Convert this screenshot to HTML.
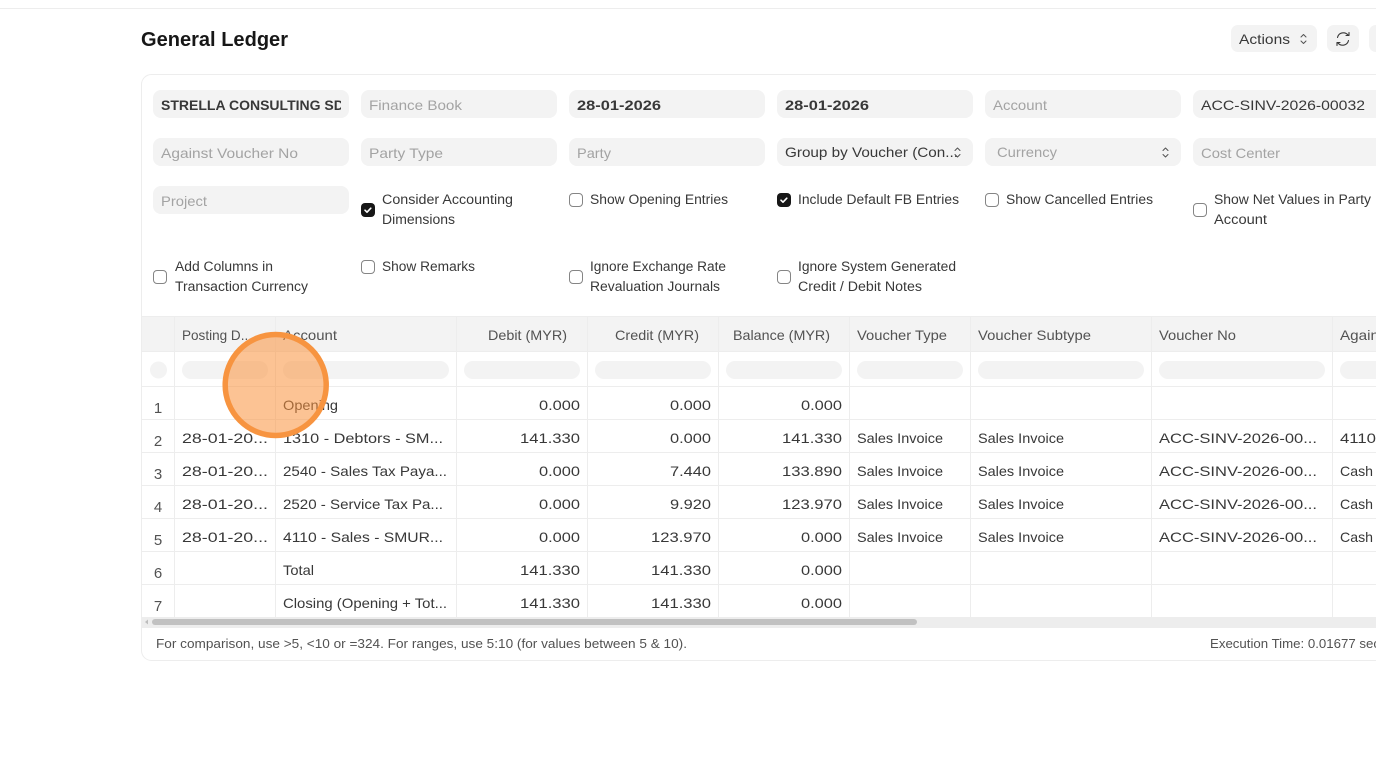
<!DOCTYPE html>
<html><head><meta charset="utf-8"><title>General Ledger</title>
<style>
html,body{margin:0;padding:0;background:#fff;width:1376px;height:769px;overflow:hidden}
svg{display:block}
text{font-family:"Liberation Sans",sans-serif;font-size:14px;fill:#383838;white-space:pre}
.ph{fill:#a3a3a3}
.val{font-weight:bold;fill:#383838}
.cb{font-size:13.500px;fill:#383838}
.h{fill:#525252}
.n{fill:#525252;text-anchor:middle;font-size:15px}
.f{font-size:13px;fill:#525252}
.in{fill:#f3f3f3}
.box{fill:#fff;stroke:#858585;stroke-width:1}
.chk{fill:#171717}
.tick{fill:none;stroke:#fff;stroke-width:1.600;stroke-linecap:round;stroke-linejoin:round}
.car{fill:none;stroke:#525252;stroke-width:1;stroke-linecap:round;stroke-linejoin:round}
.l{stroke:#ededed;stroke-width:1}
</style></head><body>
<svg width="1376" height="769" viewBox="0 0 1376 769" xmlns="http://www.w3.org/2000/svg">
<defs><clipPath id="c1"><rect x="161" y="90" width="180" height="28"/></clipPath></defs>
<rect width="1376" height="769" fill="#fff"/>
<rect x="0" y="8" width="1376" height="1" fill="#ededed"/>

<text x="141" y="46" textLength="147" lengthAdjust="spacingAndGlyphs" style="font-size:20px;font-weight:bold;fill:#171717">General Ledger</text>

<rect x="1231" y="25" width="86" height="27" rx="7" class="in"/>
<text x="1239" y="44" textLength="51" lengthAdjust="spacingAndGlyphs">Actions</text>
<path class="car" d="M1301 37l2.500-2.500 2.500 2.500M1301 41l2.500 2.500 2.500-2.500"/>
<rect x="1327" y="25" width="32" height="27" rx="7" class="in"/>
<path d="M1337.500 37.500a6 6 0 0 1 10.500-2.500M1348.500 40.500a6 6 0 0 1-10.500 2.500" fill="none" stroke="#383838" stroke-width="1.100" stroke-linecap="round"/>
<path d="M1349 32.500v3h-3M1337 45.500v-3h3" fill="none" stroke="#383838" stroke-width="1.100" stroke-linecap="round" stroke-linejoin="round"/>
<rect x="1369" y="25" width="20" height="27" rx="7" class="in"/>

<rect x="141.500" y="74.500" width="1300" height="586" rx="10" fill="#fff" stroke="#ededed"/>

<!-- filters row 1 -->
<rect x="153" y="90" width="196" height="28" rx="8" class="in"/>
<rect x="361" y="90" width="196" height="28" rx="8" class="in"/>
<rect x="569" y="90" width="196" height="28" rx="8" class="in"/>
<rect x="777" y="90" width="196" height="28" rx="8" class="in"/>
<rect x="985" y="90" width="196" height="28" rx="8" class="in"/>
<rect x="1193" y="90" width="196" height="28" rx="8" class="in"/>
<g clip-path="url(#c1)"><text x="161" y="110" class="val" textLength="193" lengthAdjust="spacingAndGlyphs">STRELLA CONSULTING SDN</text></g>
<text x="369" y="110" class="ph" textLength="93" lengthAdjust="spacingAndGlyphs">Finance Book</text>
<text x="577" y="110" class="val" textLength="84" lengthAdjust="spacingAndGlyphs">28-01-2026</text>
<text x="785" y="110" class="val" textLength="84" lengthAdjust="spacingAndGlyphs">28-01-2026</text>
<text x="993" y="110" class="ph" textLength="54" lengthAdjust="spacingAndGlyphs">Account</text>
<text x="1201" y="110" textLength="164" lengthAdjust="spacingAndGlyphs">ACC-SINV-2026-00032</text>

<!-- filters row 2 -->
<rect x="153" y="138" width="196" height="28" rx="8" class="in"/>
<rect x="361" y="138" width="196" height="28" rx="8" class="in"/>
<rect x="569" y="138" width="196" height="28" rx="8" class="in"/>
<rect x="777" y="138" width="196" height="28" rx="8" class="in"/>
<rect x="985" y="138" width="196" height="28" rx="8" class="in"/>
<rect x="1193" y="138" width="196" height="28" rx="8" class="in"/>
<text x="161" y="158" class="ph" textLength="137" lengthAdjust="spacingAndGlyphs">Against Voucher No</text>
<text x="369" y="158" class="ph" textLength="74" lengthAdjust="spacingAndGlyphs">Party Type</text>
<text x="577" y="158" class="ph" textLength="34" lengthAdjust="spacingAndGlyphs">Party</text>
<text x="785" y="157" textLength="173" lengthAdjust="spacingAndGlyphs">Group by Voucher (Con...</text>
<path class="car" d="M955 150.500l2.500-2.500 2.500 2.500M955 154.500l2.500 2.500 2.500-2.500"/>
<text x="997" y="157" class="ph" textLength="60" lengthAdjust="spacingAndGlyphs">Currency</text>
<path class="car" d="M1163 150.500l2.500-2.500 2.500 2.500M1163 154.500l2.500 2.500 2.500-2.500"/>
<text x="1201" y="158" class="ph" textLength="79" lengthAdjust="spacingAndGlyphs">Cost Center</text>

<!-- row 3 -->
<rect x="153" y="186" width="196" height="28" rx="8" class="in"/>
<text x="161" y="206" class="ph" textLength="46" lengthAdjust="spacingAndGlyphs">Project</text>

<rect x="361" y="203" width="14" height="14" rx="4" class="chk"/>
<path class="tick" d="M365 210.200l2 2 3.800-4"/>
<text x="382" y="204" class="cb" textLength="131" lengthAdjust="spacingAndGlyphs">Consider Accounting</text>
<text x="382" y="224" class="cb" textLength="73" lengthAdjust="spacingAndGlyphs">Dimensions</text>

<rect x="569.500" y="193.500" width="13" height="13" rx="3.500" class="box"/>
<text x="590" y="204" class="cb" textLength="138" lengthAdjust="spacingAndGlyphs">Show Opening Entries</text>

<rect x="777" y="193" width="14" height="14" rx="4" class="chk"/>
<path class="tick" d="M781 200.200l2 2 3.800-4"/>
<text x="798" y="204" class="cb" textLength="161" lengthAdjust="spacingAndGlyphs">Include Default FB Entries</text>

<rect x="985.500" y="193.500" width="13" height="13" rx="3.500" class="box"/>
<text x="1006" y="204" class="cb" textLength="147" lengthAdjust="spacingAndGlyphs">Show Cancelled Entries</text>

<rect x="1193.500" y="203.500" width="13" height="13" rx="3.500" class="box"/>
<text x="1214" y="204" class="cb" textLength="157" lengthAdjust="spacingAndGlyphs">Show Net Values in Party</text>
<text x="1214" y="224" class="cb" textLength="53" lengthAdjust="spacingAndGlyphs">Account</text>

<!-- row 4 -->
<rect x="153.500" y="270.500" width="13" height="13" rx="3.500" class="box"/>
<text x="175" y="271" class="cb" textLength="98" lengthAdjust="spacingAndGlyphs">Add Columns in</text>
<text x="175" y="291" class="cb" textLength="133" lengthAdjust="spacingAndGlyphs">Transaction Currency</text>

<rect x="361.500" y="260.500" width="13" height="13" rx="3.500" class="box"/>
<text x="382" y="271" class="cb" textLength="93" lengthAdjust="spacingAndGlyphs">Show Remarks</text>

<rect x="569.500" y="270.500" width="13" height="13" rx="3.500" class="box"/>
<text x="590" y="271" class="cb" textLength="136" lengthAdjust="spacingAndGlyphs">Ignore Exchange Rate</text>
<text x="590" y="291" class="cb" textLength="130" lengthAdjust="spacingAndGlyphs">Revaluation Journals</text>

<rect x="777.500" y="270.500" width="13" height="13" rx="3.500" class="box"/>
<text x="798" y="271" class="cb" textLength="158" lengthAdjust="spacingAndGlyphs">Ignore System Generated</text>
<text x="798" y="291" class="cb" textLength="124" lengthAdjust="spacingAndGlyphs">Credit / Debit Notes</text>

<!-- table header -->
<rect x="142" y="316" width="1234" height="35" fill="#f3f3f3"/>
<line class="l" x1="142" x2="1376" y1="316.500" y2="316.500"/>
<line class="l" x1="142" x2="1376" y1="351.500" y2="351.500"/>
<line class="l" x1="142" x2="1376" y1="386.500" y2="386.500"/>
<line class="l" x1="142" x2="1376" y1="419.500" y2="419.500"/>
<line class="l" x1="142" x2="1376" y1="452.500" y2="452.500"/>
<line class="l" x1="142" x2="1376" y1="485.500" y2="485.500"/>
<line class="l" x1="142" x2="1376" y1="518.500" y2="518.500"/>
<line class="l" x1="142" x2="1376" y1="551.500" y2="551.500"/>
<line class="l" x1="142" x2="1376" y1="584.500" y2="584.500"/>
<line class="l" x1="174.500" x2="174.500" y1="316" y2="618"/>
<line class="l" x1="275.500" x2="275.500" y1="316" y2="618"/>
<line class="l" x1="456.500" x2="456.500" y1="316" y2="618"/>
<line class="l" x1="587.500" x2="587.500" y1="316" y2="618"/>
<line class="l" x1="718.500" x2="718.500" y1="316" y2="618"/>
<line class="l" x1="849.500" x2="849.500" y1="316" y2="618"/>
<line class="l" x1="970.500" x2="970.500" y1="316" y2="618"/>
<line class="l" x1="1151.500" x2="1151.500" y1="316" y2="618"/>
<line class="l" x1="1332.500" x2="1332.500" y1="316" y2="618"/>

<text x="182" y="340" class="h" textLength="70" lengthAdjust="spacingAndGlyphs">Posting D...</text>
<text x="283" y="340" class="h" textLength="54" lengthAdjust="spacingAndGlyphs">Account</text>
<text x="488" y="340" class="h" textLength="79" lengthAdjust="spacingAndGlyphs">Debit (MYR)</text>
<text x="615" y="340" class="h" textLength="84" lengthAdjust="spacingAndGlyphs">Credit (MYR)</text>
<text x="733" y="340" class="h" textLength="97" lengthAdjust="spacingAndGlyphs">Balance (MYR)</text>
<text x="857" y="340" class="h" textLength="90" lengthAdjust="spacingAndGlyphs">Voucher Type</text>
<text x="978" y="340" class="h" textLength="113" lengthAdjust="spacingAndGlyphs">Voucher Subtype</text>
<text x="1159" y="340" class="h" textLength="77" lengthAdjust="spacingAndGlyphs">Voucher No</text>
<text x="1340" y="340" class="h" textLength="39" lengthAdjust="spacingAndGlyphs">Again</text>

<!-- filter row -->
<circle cx="158.500" cy="370" r="8.500" class="in"/>
<rect x="182" y="361" width="86" height="18" rx="9" class="in"/>
<rect x="283" y="361" width="166" height="18" rx="9" class="in"/>
<rect x="464" y="361" width="116" height="18" rx="9" class="in"/>
<rect x="595" y="361" width="116" height="18" rx="9" class="in"/>
<rect x="726" y="361" width="116" height="18" rx="9" class="in"/>
<rect x="857" y="361" width="106" height="18" rx="9" class="in"/>
<rect x="978" y="361" width="166" height="18" rx="9" class="in"/>
<rect x="1159" y="361" width="166" height="18" rx="9" class="in"/>
<rect x="1340" y="361" width="60" height="18" rx="9" class="in"/>

<!-- rows -->
<text x="158" y="413" class="n">1</text>
<text x="283" y="410" textLength="55" lengthAdjust="spacingAndGlyphs">Opening</text>
<text x="539" y="410" textLength="41" lengthAdjust="spacingAndGlyphs">0.000</text>
<text x="670" y="410" textLength="41" lengthAdjust="spacingAndGlyphs">0.000</text>
<text x="801" y="410" textLength="41" lengthAdjust="spacingAndGlyphs">0.000</text>

<text x="158" y="446" class="n">2</text>
<text x="182" y="443" textLength="86" lengthAdjust="spacingAndGlyphs">28-01-20...</text>
<text x="283" y="443" textLength="160" lengthAdjust="spacingAndGlyphs">1310 - Debtors - SM...</text>
<text x="520" y="443" textLength="60" lengthAdjust="spacingAndGlyphs">141.330</text>
<text x="670" y="443" textLength="41" lengthAdjust="spacingAndGlyphs">0.000</text>
<text x="782" y="443" textLength="60" lengthAdjust="spacingAndGlyphs">141.330</text>
<text x="857" y="443" textLength="86" lengthAdjust="spacingAndGlyphs">Sales Invoice</text>
<text x="978" y="443" textLength="86" lengthAdjust="spacingAndGlyphs">Sales Invoice</text>
<text x="1159" y="443" textLength="158" lengthAdjust="spacingAndGlyphs">ACC-SINV-2026-00...</text>
<text x="1340" y="443" textLength="36" lengthAdjust="spacingAndGlyphs">4110</text>

<text x="158" y="479" class="n">3</text>
<text x="182" y="476" textLength="86" lengthAdjust="spacingAndGlyphs">28-01-20...</text>
<text x="283" y="476" textLength="164" lengthAdjust="spacingAndGlyphs">2540 - Sales Tax Paya...</text>
<text x="539" y="476" textLength="41" lengthAdjust="spacingAndGlyphs">0.000</text>
<text x="670" y="476" textLength="41" lengthAdjust="spacingAndGlyphs">7.440</text>
<text x="782" y="476" textLength="60" lengthAdjust="spacingAndGlyphs">133.890</text>
<text x="857" y="476" textLength="86" lengthAdjust="spacingAndGlyphs">Sales Invoice</text>
<text x="978" y="476" textLength="86" lengthAdjust="spacingAndGlyphs">Sales Invoice</text>
<text x="1159" y="476" textLength="158" lengthAdjust="spacingAndGlyphs">ACC-SINV-2026-00...</text>
<text x="1340" y="476" textLength="33" lengthAdjust="spacingAndGlyphs">Cash</text>

<text x="158" y="512" class="n">4</text>
<text x="182" y="509" textLength="86" lengthAdjust="spacingAndGlyphs">28-01-20...</text>
<text x="283" y="509" textLength="160" lengthAdjust="spacingAndGlyphs">2520 - Service Tax Pa...</text>
<text x="539" y="509" textLength="41" lengthAdjust="spacingAndGlyphs">0.000</text>
<text x="670" y="509" textLength="41" lengthAdjust="spacingAndGlyphs">9.920</text>
<text x="782" y="509" textLength="60" lengthAdjust="spacingAndGlyphs">123.970</text>
<text x="857" y="509" textLength="86" lengthAdjust="spacingAndGlyphs">Sales Invoice</text>
<text x="978" y="509" textLength="86" lengthAdjust="spacingAndGlyphs">Sales Invoice</text>
<text x="1159" y="509" textLength="158" lengthAdjust="spacingAndGlyphs">ACC-SINV-2026-00...</text>
<text x="1340" y="509" textLength="33" lengthAdjust="spacingAndGlyphs">Cash</text>

<text x="158" y="545" class="n">5</text>
<text x="182" y="542" textLength="86" lengthAdjust="spacingAndGlyphs">28-01-20...</text>
<text x="283" y="542" textLength="160" lengthAdjust="spacingAndGlyphs">4110 - Sales - SMUR...</text>
<text x="539" y="542" textLength="41" lengthAdjust="spacingAndGlyphs">0.000</text>
<text x="651" y="542" textLength="60" lengthAdjust="spacingAndGlyphs">123.970</text>
<text x="801" y="542" textLength="41" lengthAdjust="spacingAndGlyphs">0.000</text>
<text x="857" y="542" textLength="86" lengthAdjust="spacingAndGlyphs">Sales Invoice</text>
<text x="978" y="542" textLength="86" lengthAdjust="spacingAndGlyphs">Sales Invoice</text>
<text x="1159" y="542" textLength="158" lengthAdjust="spacingAndGlyphs">ACC-SINV-2026-00...</text>
<text x="1340" y="542" textLength="33" lengthAdjust="spacingAndGlyphs">Cash</text>

<text x="158" y="578" class="n">6</text>
<text x="283" y="575" textLength="31" lengthAdjust="spacingAndGlyphs">Total</text>
<text x="520" y="575" textLength="60" lengthAdjust="spacingAndGlyphs">141.330</text>
<text x="651" y="575" textLength="60" lengthAdjust="spacingAndGlyphs">141.330</text>
<text x="801" y="575" textLength="41" lengthAdjust="spacingAndGlyphs">0.000</text>

<text x="158" y="611" class="n">7</text>
<text x="283" y="608" textLength="164" lengthAdjust="spacingAndGlyphs">Closing (Opening + Tot...</text>
<text x="520" y="608" textLength="60" lengthAdjust="spacingAndGlyphs">141.330</text>
<text x="651" y="608" textLength="60" lengthAdjust="spacingAndGlyphs">141.330</text>
<text x="801" y="608" textLength="41" lengthAdjust="spacingAndGlyphs">0.000</text>

<!-- scrollbar -->
<rect x="142" y="617" width="1234" height="11" fill="#ededed"/>
<rect x="152" y="619" width="765" height="6" rx="3" fill="#c1c1c1"/>
<path d="M145 622l3-2.500v5z" fill="#bdbdbd"/>

<!-- footer -->
<text x="156" y="648" class="f" textLength="531" lengthAdjust="spacingAndGlyphs">For comparison, use &gt;5, &lt;10 or =324. For ranges, use 5:10 (for values between 5 &amp; 10).</text>
<text x="1210" y="648" class="f" textLength="170" lengthAdjust="spacingAndGlyphs">Execution Time: 0.01677 sec</text>

<!-- highlight -->
<circle cx="275.700" cy="385" r="50.500" fill="#f9923c" fill-opacity=".55" stroke="#f79440" stroke-width="5.500"/>
</svg>
</body></html>
